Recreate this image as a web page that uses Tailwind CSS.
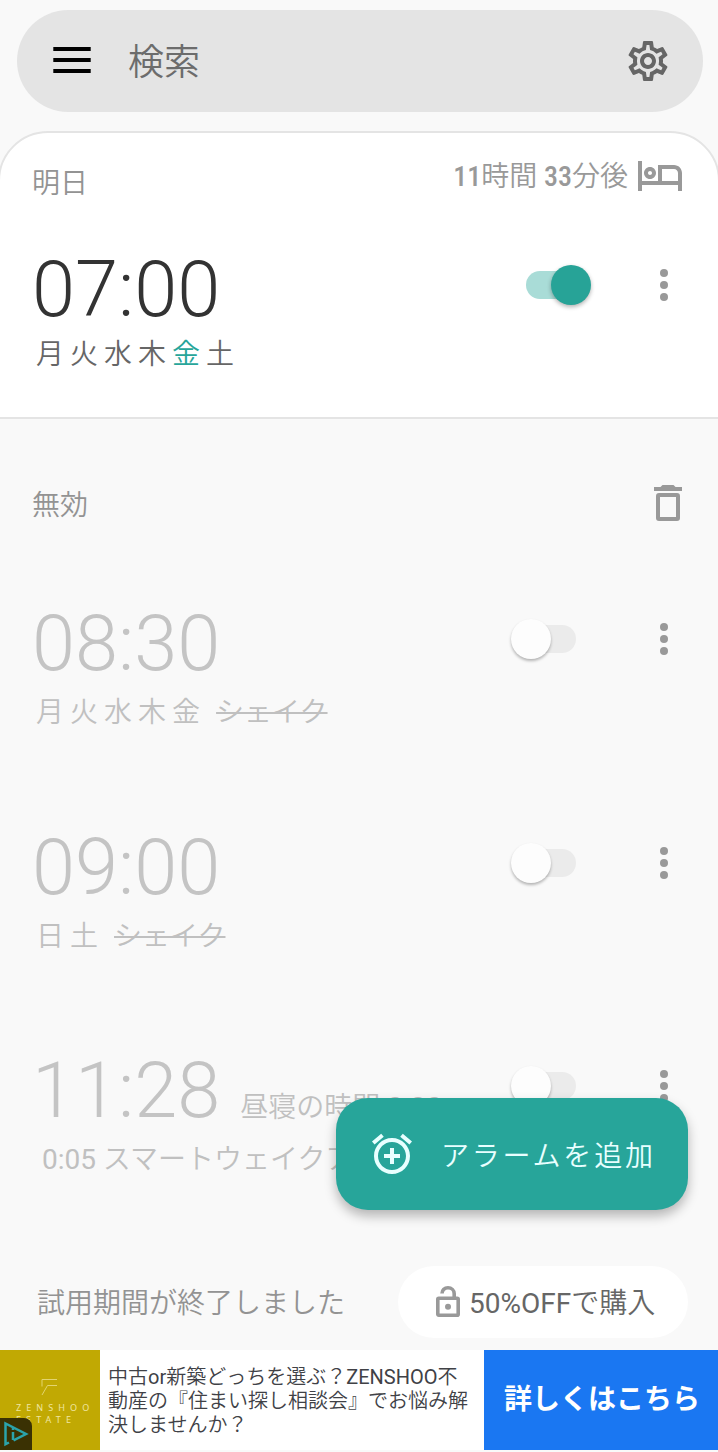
<!DOCTYPE html>
<html lang="ja">
<head>
  <meta charset="UTF-8">
  <title>アラーム</title>
  <script src="https://cdn.jsdelivr.net/npm/@tailwindcss/browser@4"></script>
</head>
<body class="bg-[#f9f9f9] font-['Roboto','Noto_Sans_CJK_JP',sans-serif]">
  <div class="relative w-[718px] h-[1452px] overflow-hidden flex flex-col text-[28px] leading-10">

    <!-- 検索バー -->
    <header class="mt-2.5 ml-[17px] w-[686px] h-[102px] shrink-0 rounded-full bg-[#e4e4e4] flex items-center pl-9 pr-[31px]">
      <svg class="-mt-0.5 w-[38px] h-[26px]" viewBox="0 0 38 26" fill="#000"><path d="M.3 0h37.4v4H.3zM.3 11h37.4v4H.3zM.3 22h37.4v4H.3z"/></svg>
      <span class="mt-1 ml-[37px] text-[36px] text-[#6c6c6c] font-[350]">検索</span>
      <svg class="ml-auto w-12 h-12" viewBox="0 0 24 24" fill="#666"><path d="M19.43 12.98c.04-.32.07-.64.07-.98s-.03-.66-.07-.98l2.11-1.65c.19-.15.24-.42.12-.64l-2-3.46c-.09-.16-.26-.25-.44-.25-.06 0-.12.01-.17.03l-2.49 1c-.52-.4-1.08-.73-1.69-.98l-.38-2.65C14.46 2.18 14.25 2 14 2h-4c-.25 0-.46.18-.49.42l-.38 2.65c-.61.25-1.17.59-1.69.98l-2.49-1c-.06-.02-.12-.03-.18-.03-.17 0-.34.09-.43.25l-2 3.46c-.13.22-.07.49.12.64l2.11 1.65c-.04.32-.07.65-.07.98s.03.66.07.98l-2.11 1.65c-.19.15-.24.42-.12.64l2 3.46c.09.16.26.25.44.25.06 0 .12-.01.17-.03l2.49-1c.52.4 1.08.73 1.69.98l.38 2.65c.03.24.24.42.49.42h4c.25 0 .46-.18.49-.42l.38-2.65c.61-.25 1.17-.59 1.69-.98l2.49 1c.06.02.12.03.18.03.17 0 .34-.09.43-.25l2-3.46c.12-.22.07-.49-.12-.64l-2.11-1.65zm-1.98-1.71c.04.31.05.52.05.73 0 .21-.02.43-.05.73l-.14 1.13.89.7 1.08.84-.7 1.21-1.27-.51-1.04-.42-.9.68c-.43.32-.84.56-1.25.73l-1.06.43-.16 1.13-.2 1.35h-1.4l-.19-1.35-.16-1.13-1.06-.43c-.43-.18-.83-.41-1.23-.71l-.91-.7-1.06.43-1.27.51-.7-1.21 1.08-.84.89-.7-.14-1.13c-.03-.31-.05-.54-.05-.74s.02-.43.05-.73l.14-1.13-.89-.7-1.08-.84.7-1.21 1.27.51 1.04.42.9-.68c.43-.32.84-.56 1.25-.73l1.06-.43.16-1.13.2-1.35h1.39l.19 1.35.16 1.13 1.06.43c.43.18.83.41 1.23.71l.91.7 1.06-.43 1.27-.51.7 1.21-1.07.85-.89.7.14 1.13zM12 8c-2.21 0-4 1.79-4 4s1.79 4 4 4 4-1.79 4-4-1.79-4-4-4zm0 6c-1.1 0-2-.9-2-2s.9-2 2-2 2 .9 2 2-.9 2-2 2z"/></svg>
    </header>

    <!-- 次のアラーム -->
    <section class="mt-[19px] -mx-0.5 h-[288px] shrink-0 rounded-t-[50px] border-2 border-[#e4e4e4] bg-white">
      <div class="h-[117px] flex items-start justify-between pl-8 pr-[34px]">
        <span class="mt-[31px] text-[#939393] font-[350]">明日</span>
        <div class="mt-[18px] flex items-center text-[#999]">
          <span class="mt-1 font-[350]"><span class="font-['Roboto_Condensed','Roboto'] font-medium">11</span>時間 <span class="font-['Roboto_Condensed','Roboto'] font-medium">33</span>分後</span>
          <svg class="ml-2 w-12 h-12" viewBox="0 0 24 24" fill="#999"><path d="M7 14c1.66 0 3-1.34 3-3S8.66 8 7 8s-3 1.34-3 3 1.34 3 3 3zm0-4c.55 0 1 .45 1 1s-.45 1-1 1-1-.45-1-1 .45-1 1-1zm12-3h-8v8H3V5H1v15h2v-3h18v3h2v-9c0-2.21-1.79-4-4-4zm2 8h-8V9h6c1.1 0 2 .9 2 2v4z"/></svg>
        </div>
      </div>
      <div class="flex items-start">
        <div class="w-[526px] pl-8">
          <div class="text-[77.5px] leading-[80px] font-light text-[#333]">07:00</div>
          <div class="mt-[5px] ml-1 flex gap-1.5 font-[350] text-[#666]">
            <span>月</span><span>火</span><span>水</span><span>木</span><span class="text-[#27a59a]">金</span><span>土</span>
          </div>
        </div>
        <div class="mt-[21px] w-[60px] h-7 rounded-full bg-[#a9dcd7] relative">
          <div class="absolute left-[25px] -top-1.5 size-10 rounded-full bg-[#27a397] shadow-[0_2px_4px_rgba(0,0,0,0.3)]"></div>
        </div>
        <svg class="mt-[19px] ml-[74px] w-2 h-8" viewBox="0 0 8 32" fill="#999"><circle cx="4" cy="4" r="4"/><circle cx="4" cy="16" r="4"/><circle cx="4" cy="28" r="4"/></svg>
      </div>
    </section>

    <!-- 無効なアラーム -->
    <section class="h-[847px] shrink-0">
      <div class="h-[185px] pt-[64px] pl-8 pr-9 flex items-start justify-between">
        <span class="mt-[3px] text-[#939393] font-[350]">無効</span>
        <svg class="mt-0.5 w-7 h-9" viewBox="0 0 28 36"><path d="M0 2h6.5l2-2h11l2 2H28v4H0z" fill="#999"/><rect x="4" y="10" width="20" height="24" rx="1" fill="none" stroke="#999" stroke-width="4"/></svg>
      </div>

      <div class="h-[224px] flex items-start text-[#c4c4c4]">
        <div class="w-[516px] pl-8">
          <div class="text-[77.5px] leading-[80px] font-light">08:30</div>
          <div class="mt-[9px] ml-1 flex gap-1.5 font-[350] text-[#c0c0c0]">
            <span>月</span><span>火</span><span>水</span><span>木</span><span>金</span><span class="ml-2.5 line-through">シェイク</span>
          </div>
        </div>
        <div class="mt-[21px] w-[60px] h-7 rounded-full bg-[#ebebeb] relative">
          <div class="absolute -left-[5px] -top-1.5 size-10 rounded-full bg-[#fdfdfd] shadow-[0_2px_3px_rgba(0,0,0,0.28)]"></div>
        </div>
        <svg class="mt-[19px] ml-[84px] w-2 h-8" viewBox="0 0 8 32" fill="#999"><circle cx="4" cy="4" r="4"/><circle cx="4" cy="16" r="4"/><circle cx="4" cy="28" r="4"/></svg>
      </div>

      <div class="h-[223px] flex items-start text-[#c4c4c4]">
        <div class="w-[516px] pl-8">
          <div class="text-[77.5px] leading-[80px] font-light">09:00</div>
          <div class="mt-[9px] ml-1 flex gap-1.5 font-[350] text-[#c0c0c0]">
            <span>日</span><span>土</span><span class="ml-2.5 line-through">シェイク</span>
          </div>
        </div>
        <div class="mt-[21px] w-[60px] h-7 rounded-full bg-[#ebebeb] relative">
          <div class="absolute -left-[5px] -top-1.5 size-10 rounded-full bg-[#fdfdfd] shadow-[0_2px_3px_rgba(0,0,0,0.28)]"></div>
        </div>
        <svg class="mt-[19px] ml-[84px] w-2 h-8" viewBox="0 0 8 32" fill="#999"><circle cx="4" cy="4" r="4"/><circle cx="4" cy="16" r="4"/><circle cx="4" cy="28" r="4"/></svg>
      </div>

      <div class="flex items-start text-[#c4c4c4]">
        <div class="w-[516px] pl-8">
          <div class="h-20 flex items-baseline text-[77.5px] leading-[80px] font-light">11:28<span class="ml-5 text-[28px] leading-10 font-[350] text-[#c0c0c0]">昼寝の時間 <span class="font-medium">0:20</span></span></div>
          <div class="mt-[9px] ml-2.5 font-[350] text-[#c0c0c0] whitespace-nowrap"><span class="font-[450]">0:05</span> スマートウェイクアップ</div>
        </div>
        <div class="mt-[21px] w-[60px] h-7 rounded-full bg-[#ebebeb] relative">
          <div class="absolute -left-[5px] -top-1.5 size-10 rounded-full bg-[#fdfdfd] shadow-[0_2px_3px_rgba(0,0,0,0.28)]"></div>
        </div>
        <svg class="mt-[19px] ml-[84px] w-2 h-8" viewBox="0 0 8 32" fill="#999"><circle cx="4" cy="4" r="4"/><circle cx="4" cy="16" r="4"/><circle cx="4" cy="28" r="4"/></svg>
      </div>
    </section>

    <!-- 試用期間 -->
    <div class="h-[84px] shrink-0 pl-[37px] pr-[30px] flex items-start justify-between">
      <span class="mt-[18px] font-[350] text-[#939393]">試用期間が終了しました</span>
      <button class="w-[290px] h-[72px] rounded-full bg-white flex items-center pl-[38px] font-[350] text-[#666]">
        <svg class="-mt-0.5 w-6 h-[31px]" viewBox="0 0 24 31" fill="none" stroke="#999" stroke-width="3.6"><rect x="1.8" y="12.3" width="20.4" height="16.9" rx="1"/><path d="M6 7.5C6 4 8.500 1.800 12 1.800s6.200 2.600 6.200 6v4.500"/><circle cx="12" cy="20.700" r="3" fill="#999" stroke="none"/></svg>
        <span class="mt-1 ml-[9px]"><span class="font-normal">50%OFF</span>で購入</span>
      </button>
    </div>

    <!-- 広告 -->
    <div class="h-[100px] shrink-0 flex bg-white">
      <div class="relative w-[100px] h-[100px] bg-[#c1a903] text-[#f0e6a0] text-[9px] leading-3 font-['Noto_Sans','Open_Sans',sans-serif]">
        <svg class="ml-10 mt-7 w-[18px] h-[18px]" viewBox="0 0 18 18" fill="none" stroke="#e2d470" stroke-width="1"><path d="M17 1.500H2v7M17 7.500H7.500L2 17"/></svg>
        <div class="ml-4 mt-1.5 tracking-[5.100px] whitespace-nowrap">
          <div>ZENSHOO</div>
          <div>ESTATE</div>
        </div>
        <div class="absolute left-0 bottom-0 w-8 h-8 rounded-tr-lg bg-[#3a3103]">
          <svg class="w-8 h-8" viewBox="0 0 32 32" fill="none" stroke="#2ba3ab" stroke-width="2.500"><path d="M9 24.500l-3.500 1.700V5.500L26 16 13.500 22.300"/><path d="M13 14v8M13 9.500v2.500"/></svg>
        </div>
      </div>
      <p class="w-[384px] pl-2 pt-[15px] text-[20px] leading-6 font-[350] text-[#404146] whitespace-nowrap">中古<span class="font-normal">or</span>新築どっちを選ぶ？<span class="font-normal">ZENSHOO</span>不<br>動産の『住まい探し相談会』でお悩み解<br>決しませんか？</p>
      <div class="w-[234px] bg-[#1a77f2] text-white font-bold flex items-center justify-center pl-0.5">詳しくはこちら</div>
    </div>

    <!-- 追加ボタン -->
    <button class="absolute left-[336px] top-[1098px] w-[352px] h-[112px] rounded-[32px] bg-[#27a59a] text-white flex items-center pl-8 shadow-[0_6px_12px_rgba(0,0,0,0.28)]">
      <svg class="w-12 h-12" viewBox="0 0 24 24" fill="#e8ffff"><path d="M7.88 3.39L6.6 1.86 2 5.71l1.29 1.53 4.59-3.85zM22 5.72l-4.6-3.86-1.29 1.53 4.6 3.86L22 5.72zM12 4c-4.97 0-9 4.03-9 9s4.02 9 9 9c4.97 0 9-4.03 9-9s-4.03-9-9-9zm0 16c-3.87 0-7-3.13-7-7s3.13-7 7-7 7 3.13 7 7-3.13 7-7 7zm1-11h-2v3H8v2h3v3h2v-3h3v-2h-3V9z"/></svg>
      <span class="mt-[5px] ml-[25px] tracking-[2.800px] font-[350] text-[#e8ffff]">アラームを追加</span>
    </button>
  </div>
</body>
</html>
